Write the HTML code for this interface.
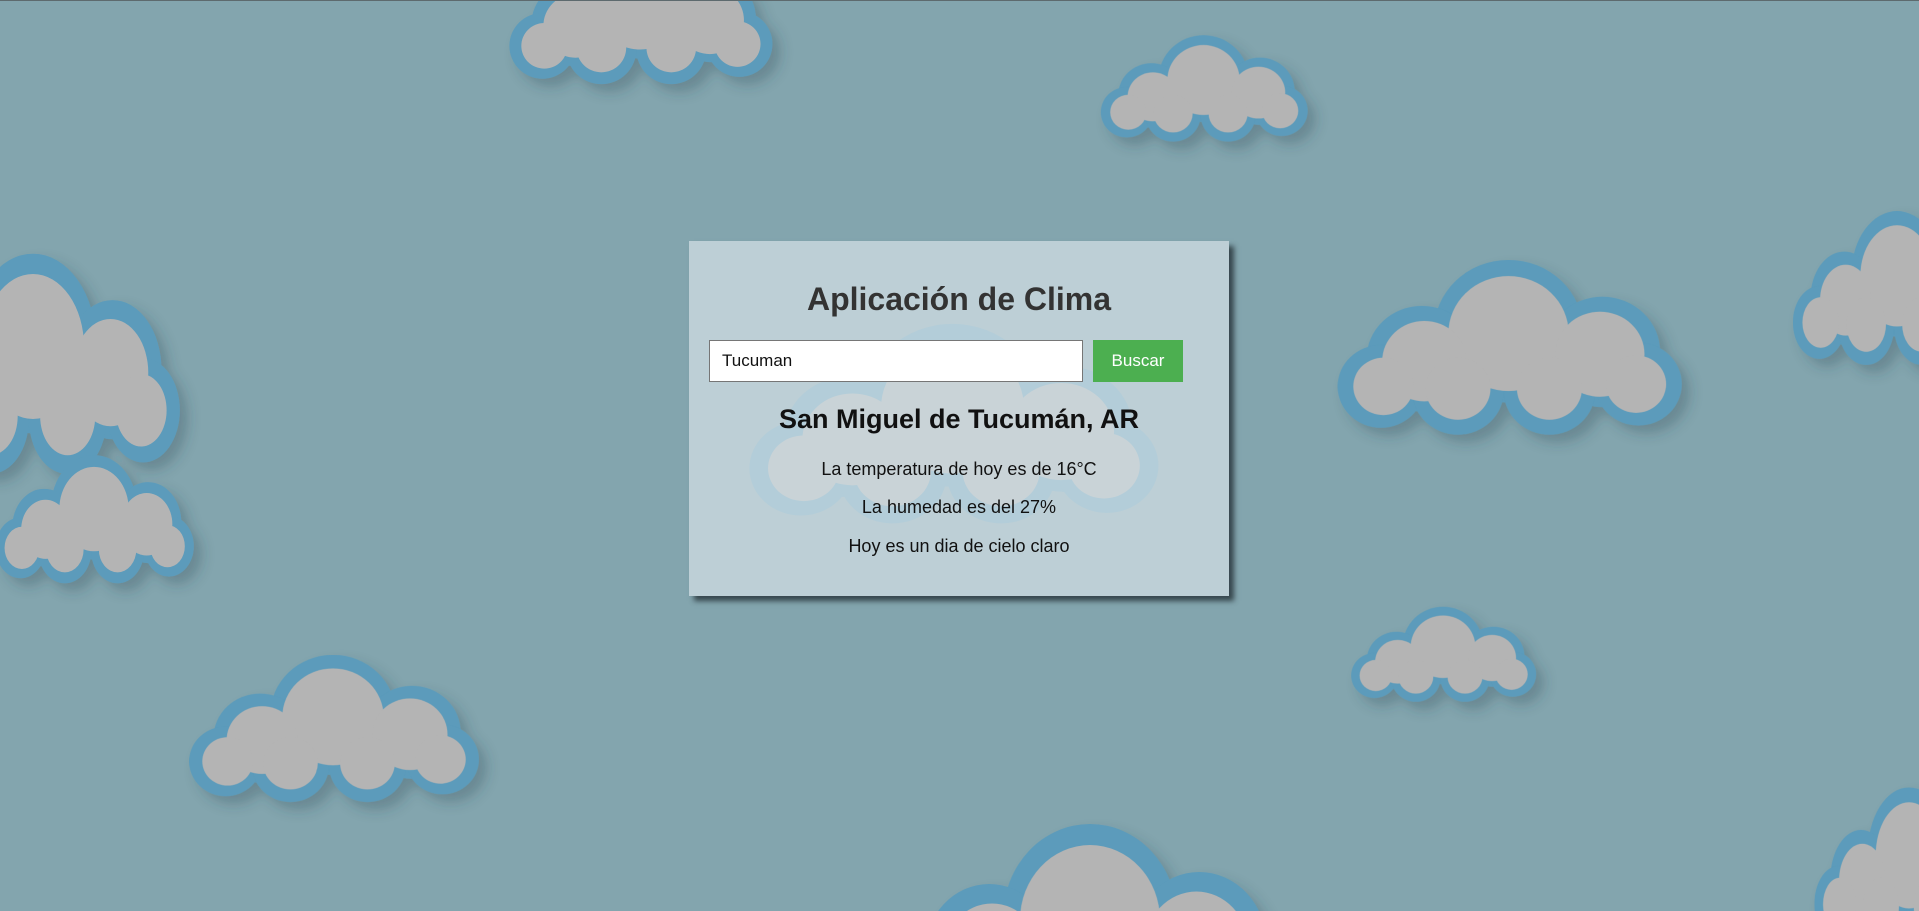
<!DOCTYPE html>
<html><head><meta charset="utf-8">
<style>
html,body{margin:0;padding:0;width:1919px;height:911px;overflow:hidden;background:#83a5ae;font-family:"Liberation Sans",Arial,sans-serif;}
.topline{position:absolute;left:0;top:0;width:1919px;height:1px;background:#5d6a6e;}
.wrap{position:absolute;left:0;top:0;width:1919px;height:911px;overflow:hidden;}
svg.bg{position:absolute;left:0;top:0;}
.card{position:absolute;left:689px;top:241px;width:540px;height:355px;background:rgba(208,222,227,0.75);box-shadow:5px 5px 5px rgba(30,40,45,0.75);}
.inp{position:absolute;left:20px;top:99px;height:40px;background:#fff;border:1px solid #767676;font-size:17px;line-height:40px;padding-left:12px;color:#111;width:360px;}
.btn{position:absolute;left:404px;top:99px;width:90px;height:42px;background:#4caf50;color:#fff;font-size:17px;line-height:42px;text-align:center;}
.t{position:absolute;left:0;width:100%;text-align:center;color:#111;}
</style></head><body>
<div class="wrap">
<svg class="bg" width="1919" height="911" viewBox="0 0 1919 911">
<defs>
<symbol id="c" viewBox="0 0 300 160" preserveAspectRatio="none">
<g fill="#5b9bbb">
<circle cx="150" cy="68" r="62"/><circle cx="78" cy="92" r="46"/><circle cx="228" cy="86" r="48"/>
<circle cx="44" cy="116" r="36"/><circle cx="108" cy="120" r="38"/><circle cx="184" cy="120" r="38"/><circle cx="258" cy="114" r="36"/>
</g>
<g fill="#b4b4b4">
<circle cx="150" cy="70" r="50"/><circle cx="80" cy="94" r="35"/><circle cx="226" cy="88" r="37"/>
<circle cx="46" cy="116" r="25"/><circle cx="108" cy="118" r="27"/><circle cx="184" cy="118" r="27"/><circle cx="256" cy="114" r="25"/>
</g>
</symbol>
<filter id="sh"><feDropShadow dx="8" dy="8" stdDeviation="6" flood-color="#345" flood-opacity="0.3"/></filter>
</defs>
<g filter="url(#sh)">
<use href="#c" x="502" y="-60" width="276" height="146"/>
<use href="#c" x="1095" y="31" width="217" height="112"/>
<use href="#c" x="-120" y="245" width="306" height="232"/>
<use href="#c" x="-10" y="450" width="208" height="135"/>
<use href="#c" x="1328" y="253" width="361" height="184"/>
<use href="#c" x="1787" y="205" width="220" height="162"/>
<use href="#c" x="1346" y="603" width="194" height="100"/>
<use href="#c" x="181" y="649" width="304" height="155"/>
<use href="#c" x="880" y="815" width="420" height="240"/>
<use href="#c" x="1809" y="781" width="200" height="170"/>
</g>
<use href="#c" x="738" y="316" width="429" height="210"/>
</svg>
</div>
<div class="topline"></div>
<div class="card">
<div class="t" style="top:40px;font-size:32px;font-weight:bold;color:#333;">Aplicación de Clima</div>
<div class="inp">Tucuman</div>
<div class="btn">Buscar</div>
<div class="t" style="top:163px;font-size:27px;font-weight:bold;">San Miguel de Tucumán, AR</div>
<div class="t" style="top:218px;font-size:18px;">La temperatura de hoy es de 16°C</div>
<div class="t" style="top:256px;font-size:18px;">La humedad es del 27%</div>
<div class="t" style="top:295px;font-size:18px;">Hoy es un dia de cielo claro</div>
</div>
</body></html>
